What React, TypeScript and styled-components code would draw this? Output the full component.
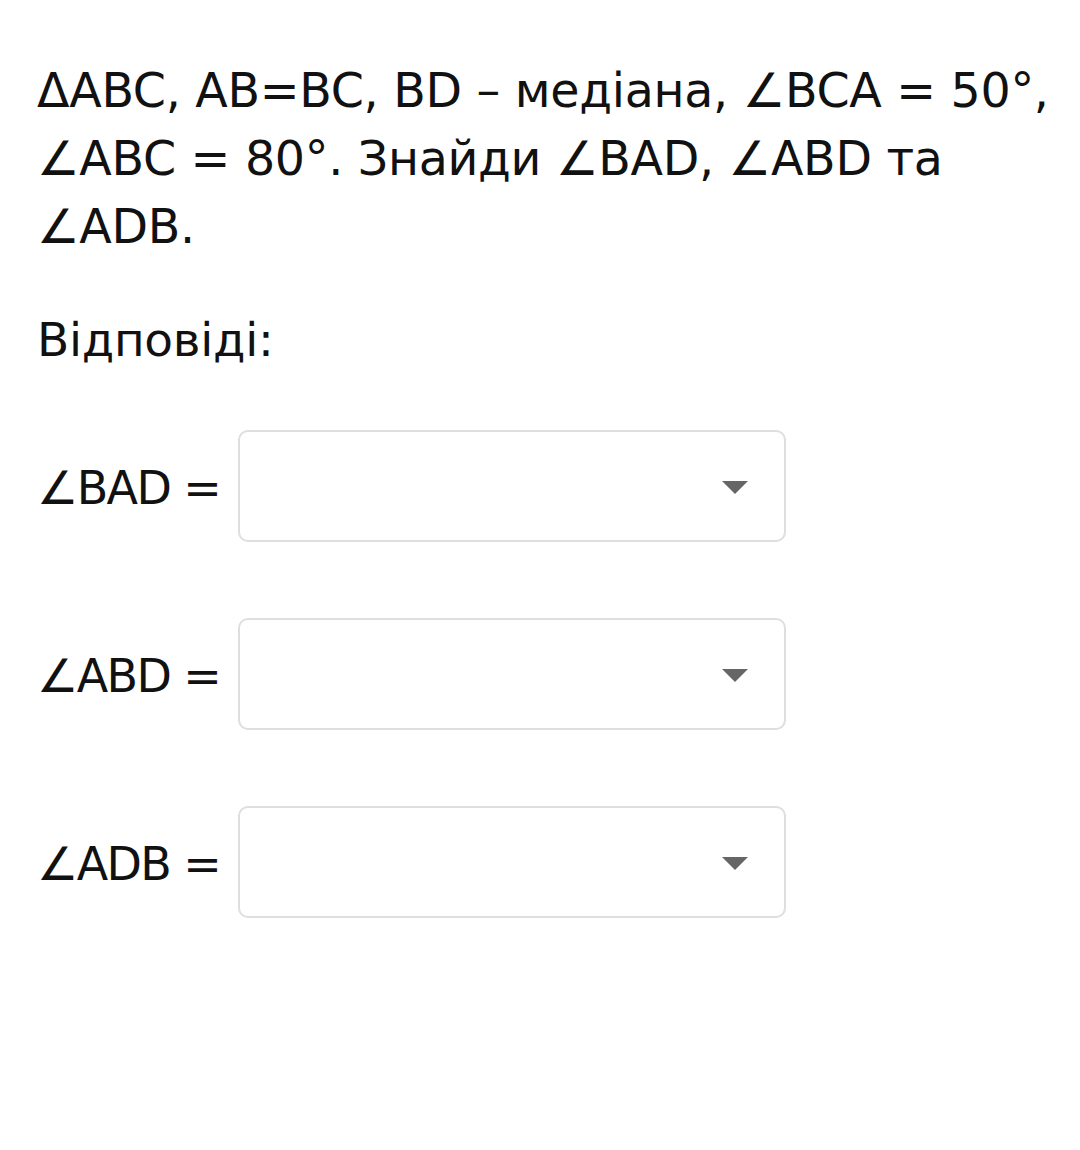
import React from 'react';
import styled, { createGlobalStyle } from 'styled-components';

const GlobalStyle = createGlobalStyle`
  html, body {
    margin: 0;
    padding: 0;
    background: #ffffff;
  }
  body {
    font-family: "DejaVu Sans", "Noto Sans", sans-serif;
    color: #111111;
  }
`;

const StyledMain = styled.main`
  width: 1080px;
  min-height: 1150px;
  box-sizing: border-box;
  padding: 57px 20px 0 37px;
`;

const StyledQuestion = styled.p`
  margin: 0;
  font-size: 47.5px;
  line-height: 68px;
  letter-spacing: -0.3px;
  white-space: nowrap;
`;

const StyledHeading = styled.h2`
  margin: 45px 0 0;
  font-size: 47px;
  font-weight: 400;
  line-height: 68px;
  letter-spacing: -0.3px;
`;

const StyledAnswers = styled.div`
  display: flex;
  flex-direction: column;
  gap: 76px;
  margin-top: 56px;
`;

const StyledRow = styled.div`
  display: flex;
  align-items: center;
`;

const StyledLabel = styled.span`
  font-size: 46px;
  letter-spacing: -1.6px;
  width: 201px;
  white-space: nowrap;
  margin-top: 4px;
`;

const StyledSelect = styled.div`
  width: 548px;
  height: 112px;
  box-sizing: border-box;
  border: 2px solid #dedede;
  border-radius: 10px;
  background: #ffffff;
  display: flex;
  align-items: center;
  justify-content: flex-end;
  padding-right: 36px;
`;

const StyledArrow = styled.span`
  width: 0;
  height: 0;
  border-left: 13px solid transparent;
  border-right: 13px solid transparent;
  border-top: 13px solid #666666;
  margin-top: 2px;
`;

const answers = ['∠BAD =', '∠ABD =', '∠ADB ='];

function App() {
  return (
    <StyledMain>
      <GlobalStyle />
      <StyledQuestion>
        ΔABC, AB=BC, BD – медіана, ∠BCA = 50°,
        <br />
        ∠ABC = 80°. Знайди ∠BAD, ∠ABD та
        <br />
        ∠ADB.
      </StyledQuestion>
      <StyledHeading>Відповіді:</StyledHeading>
      <StyledAnswers>
        {answers.map((label) => (
          <StyledRow key={label}>
            <StyledLabel>{label}</StyledLabel>
            <StyledSelect role="combobox">
              <StyledArrow />
            </StyledSelect>
          </StyledRow>
        ))}
      </StyledAnswers>
    </StyledMain>
  );
}

export default App;
